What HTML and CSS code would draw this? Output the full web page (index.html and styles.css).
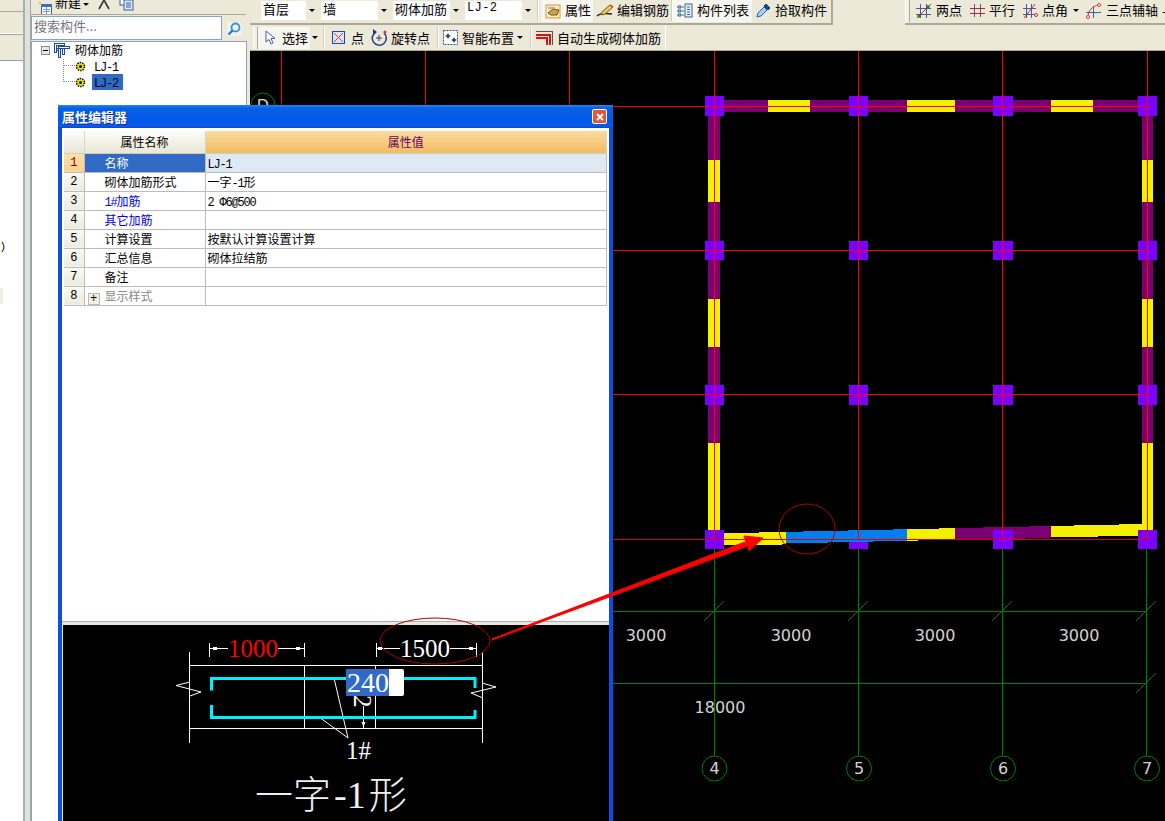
FILE: index.html
```html
<!DOCTYPE html>
<html lang="zh">
<head>
<meta charset="utf-8">
<title>属性编辑器</title>
<link rel="stylesheet" href="styles.css">
</head>
<body>
<div class="app">
  <aside class="sidebar">
    <div class="side-row side-row-a"></div>
    <div class="side-row side-row-b"></div>
    <div class="side-row side-row-c"></div>
    <div class="side-list">
      <div class="side-text">?)</div>
      <div class="side-mark"></div>
    </div>
  </aside>
  <div class="splitter"></div>
  <section class="panel">
    <div class="panel-tools">
      <svg class="ptool-new" width="14" height="14" viewBox="0 0 14 14"><rect x="2.500" y="2.500" width="10" height="10" fill="#fff" stroke="#3b5fa8"/><rect x="2" y="2" width="11" height="3" fill="#3b6fc4"/><path d="M4 7.500h7M4 9.500h7M7.500 5v7" stroke="#7f9bd0"/><rect x="0" y="0" width="2" height="2" fill="#e8c040"/></svg>
      <span class="ptool-label">新建</span>
      <span class="caret ptool-caret"></span>
      <svg class="ptool-x" width="13" height="13" viewBox="0 0 13 13"><path d="M1 12L6 3 11 12M6 3L3 0M6 3l3-3" fill="none" stroke="#333" stroke-width="1.6"/></svg>
      <svg class="ptool-copy" width="15" height="14" viewBox="0 0 15 14"><rect x="1" y="0" width="8" height="8" fill="#fff" stroke="#3b5fa8"/><rect x="5" y="3" width="9" height="10" fill="#dfe8f8" stroke="#3b5fa8"/><path d="M7 6h5M7 8h5M7 10h5" stroke="#3b5fa8"/></svg>
    </div>
    <div class="search-row">
      <div class="search-box">搜索构件...</div>
      <div class="search-btn">
        <svg width="14" height="14" viewBox="0 0 14 14"><circle cx="8.5" cy="5.5" r="4" fill="#e8f4ff" stroke="#3a8fd8" stroke-width="1.8"/><path d="M5.5 8.5L1.5 12.5" stroke="#2a78c8" stroke-width="2.4"/></svg>
      </div>
    </div>
    <div class="tree">
      <div class="tree-root">
        <span class="expander"></span>
        <svg class="tree-icon" width="16" height="15" viewBox="0 0 16 15" shape-rendering="crispEdges"><path d="M0.500 0.500h10v2h-8v7h-2zM4.500 3.500h11v2h-11zM4.500 5.500h2v9h-2zM8.500 5.500h2v6h-2z" fill="#fff" stroke="#1c49a8"/><path d="M2.500 5.500h2M2.500 7.500h2" stroke="#1c49a8"/></svg>
        <span class="tree-label">砌体加筋</span>
      </div>
      <div class="tree-child">
        <span class="tree-dots"></span>
        <svg class="gear" width="11" height="11" viewBox="0 0 11 11"><circle cx="5.500" cy="5.500" r="4" fill="#e8e800" stroke="#000" stroke-width="1.500" stroke-dasharray="1.500 1"/><circle cx="5.500" cy="5.500" r="1.500" fill="#000"/></svg>
        <span class="tree-item latin">LJ-1</span>
      </div>
      <div class="tree-child">
        <span class="tree-dots tree-dots-tall"></span>
        <svg class="gear" width="11" height="11" viewBox="0 0 11 11"><circle cx="5.500" cy="5.500" r="4" fill="#e8e800" stroke="#000" stroke-width="1.500" stroke-dasharray="1.500 1"/><circle cx="5.500" cy="5.500" r="1.500" fill="#000"/></svg>
        <span class="tree-item tree-item-sel latin">LJ-2</span>
      </div>
    </div>
  </section>

  <main class="main">
    <div class="toolbars">
      <div class="tb-row tb-row-one">
        <div class="tb-group tb-group-left">
          <div class="combo combo-short"><span class="combo-text">首层</span><span class="combo-arrow"><span class="caret"></span></span></div>
          <div class="combo"><span class="combo-text">墙</span><span class="combo-arrow"><span class="caret"></span></span></div>
          <div class="combo"><span class="combo-text">砌体加筋</span><span class="combo-arrow"><span class="caret"></span></span></div>
          <div class="combo"><span class="combo-text latin-combo">LJ-2</span><span class="combo-arrow"><span class="caret"></span></span></div>
          <span class="sep sep-first"></span>
          <div class="tbtn tbtn-on tbtn-attr">
            <svg width="17" height="16" viewBox="0 0 17 16"><rect x="1" y="2" width="14" height="13" fill="#fbe9c0" stroke="#e8963a"/><path d="M3 10l5-4 6 1-2 5H6z" fill="#c9a24a" stroke="#6b5a20"/><path d="M3 5h7" stroke="#7f7f7f"/></svg>
            <span>属性</span>
          </div>
          <div class="tbtn tbtn-edit">
            <svg width="18" height="15" viewBox="0 0 18 15"><path d="M1 13c3-3 8-3 15-2" fill="none" stroke="#222" stroke-width="1.300"/><path d="M6 9l8-7 3 2-8 7-4 1z" fill="#efc94a" stroke="#6b5a20"/><path d="M14 2l3 2" stroke="#d04020" stroke-width="1.500"/></svg>
            <span>编辑钢筋</span>
          </div>
          <span class="sep sep-tight"></span>
          <div class="tbtn tbtn-on tbtn-list">
            <svg width="16" height="15" viewBox="0 0 16 15"><rect x="8" y="1" width="7" height="13" fill="#e8f0fc" stroke="#3b5fa8"/><path d="M10 4h3M10 6.500h3M10 9h3M10 11.500h3" stroke="#3b5fa8"/><path d="M1 3h3v2H1zM1 7h3v2H1zM1 11h3v2H1z" fill="#dfe8f8" stroke="#2a5c8a"/><path d="M5 4h2M5 8h2M5 12h2" stroke="#2a8a3a"/></svg>
            <span>构件列表</span>
          </div>
          <div class="tbtn tbtn-pick">
            <svg width="16" height="16" viewBox="0 0 16 16"><path d="M2 14l1-4 6-6 3 3-6 6z" fill="#a8d0f4" stroke="#2a62b8"/><path d="M9 3l2-2 4 4-2 2z" fill="#1c49a8" stroke="#1c3a78"/></svg>
            <span>拾取构件</span>
          </div>
        </div>
        <div class="tb-group tb-group-right">
          <span class="grip"></span>
          <div class="tbtn tbtn-axis tbtn-axis-first">
            <svg width="16" height="16" viewBox="0 0 16 16"><path d="M4.500 1v14M10.500 1v14M0 5.500h15M0 11.500h15" stroke="#3b5fa8"/><path d="M1 15L15 1" stroke="#e02020"/><circle cx="3" cy="13" r="1.700" fill="#2f7a20"/><circle cx="12" cy="4" r="1.700" fill="#2f7a20"/></svg>
            <span>两点</span>
          </div>
          <div class="tbtn tbtn-axis">
            <svg width="15" height="15" viewBox="0 0 15 15"><path d="M4.500 1v13M10.500 1v13" stroke="#3b5fa8"/><path d="M0 5.500h15M0 10.500h15" stroke="#c82020"/></svg>
            <span>平行</span>
          </div>
          <div class="tbtn tbtn-axis tbtn-angle">
            <svg width="15" height="16" viewBox="0 0 15 16"><path d="M3.500 1v14M8.500 1v14M0 5.500h13M0 11.500h13" stroke="#3b5fa8"/><path d="M1 15L12 1" stroke="#e02020"/><circle cx="13" cy="12" r="1.500" fill="#fff" stroke="#e02020"/></svg>
            <span>点角</span>
            <span class="caret caret-axis"></span>
          </div>
          <div class="tbtn tbtn-axis tbtn-arc">
            <svg width="16" height="16" viewBox="0 0 16 16"><path d="M7.500 3v12M0 9.500h15" stroke="#3b5fa8"/><path d="M2 14C2 8 6 3 13 2" fill="none" stroke="#e03030"/><circle cx="2" cy="14" r="1.500" fill="#fff" stroke="#e03030"/><circle cx="13" cy="2" r="1.500" fill="#fff" stroke="#e03030"/></svg>
            <span>三点辅轴</span>
          </div>
          <span class="tb-more">-</span>
        </div>
      </div>
      <div class="tb-row tb-row-two">
        <div class="tb-group tb-group-two">
          <span class="grip grip-two"></span>
          <div class="tbtn tbtn-on tbtn-select">
            <svg width="11" height="15" viewBox="0 0 11 15"><path d="M1 1v11l3-2.500 2 4.500 2-1-2-4.500h4z" fill="#fff" stroke="#3b5fa8"/></svg>
            <span>选择</span>
          </div>
          <span class="caret caret-two"></span>
          <span class="sep sep-a"></span>
          <div class="tbtn tbtn-point">
            <svg width="13" height="13" viewBox="0 0 13 13"><rect x="0.500" y="0.500" width="12" height="12" fill="#dbe6f8" stroke="#1c49a8"/><path d="M2 2l9 9M11 2l-9 9" stroke="#d04040"/></svg>
            <span>点</span>
          </div>
          <div class="tbtn tbtn-rotate">
            <svg width="17" height="17" viewBox="0 0 17 17"><path d="M5 3a7 7 0 1 0 8 1" fill="none" stroke="#1c3a78" stroke-width="1.500"/><path d="M2 0l4 3-4 2z" fill="#1c3a78"/><path d="M8 6v6M5 9h6" stroke="#1c3a78"/><circle cx="14" cy="3" r="1.500" fill="#d04040"/></svg>
            <span>旋转点</span>
          </div>
          <span class="sep sep-b"></span>
          <div class="tbtn tbtn-smart">
            <svg width="15" height="15" viewBox="0 0 15 15"><rect x="0.500" y="0.500" width="14" height="14" fill="#fff" stroke="#2a5c8a" stroke-dasharray="2 1"/><path d="M4 5l1-2 1 2 2 1-2 1-1 2-1-2-2-1zM10 9l1-2 1 2 2 1-2 1-1 2-1-2-2-1z" fill="#1c3a78"/></svg>
            <span>智能布置</span>
          </div>
          <span class="caret caret-smart"></span>
          <span class="sep sep-c"></span>
          <div class="tbtn tbtn-auto">
            <svg width="17" height="15" viewBox="0 0 17 15" shape-rendering="crispEdges"><path d="M0 1.500h16.500V15" fill="none" stroke="#555"/><path d="M0 4.500h13.500V15M0 7.500h10.500V15" fill="none" stroke="#e01010" stroke-width="2"/></svg>
            <span>自动生成砌体加筋</span>
          </div>
        </div>
      </div>
    </div>

    <div class="canvas">
      <svg class="canvas-svg" width="915" height="770" viewBox="250 51 915 770" shape-rendering="crispEdges">
        <g class="green">
          <path d="M714.500 540V756M858.500 540V756M1002.500 540V756M1146.500 540V756"/>
          <path d="M613 611.500H1147M613 683.500H1147"/>
          <path d="M704 621L724 601M848 621L868 601M992 621L1012 601M1136 621L1156 601M1136 693L1156 673"/>
        </g>
        <g class="wall-purple">
          <rect x="724" y="100" width="414" height="12"/>
          <rect x="708" y="116" width="12" height="414"/>
          <rect x="1142" y="116" width="11" height="414"/>
        </g>
        <g class="wall-yellow">
          <rect x="768" y="100" width="42" height="12"/>
          <rect x="907" y="100" width="48" height="12"/>
          <rect x="1051" y="100" width="42" height="12"/>
          <rect x="708" y="160" width="12" height="42"/>
          <rect x="708" y="299" width="12" height="48"/>
          <rect x="708" y="443" width="12" height="87"/>
          <rect x="1142" y="160" width="11" height="42"/>
          <rect x="1142" y="299" width="11" height="48"/>
          <rect x="1142" y="443" width="11" height="87"/>
          <polygon points="724,533 759,533 759,532 786,532 786,544 782,544 782,545 724,545"/>
          <polygon points="907,529 939,529 939,528 955,528 955,540 918,540 918,541 907,541"/>
          <polygon points="1051,526 1074,526 1074,525 1119,525 1119,524 1142,524 1142,536 1098,536 1098,537 1051,537 1051,538"/>
        </g>
        <polygon class="wall-purple" points="955,528 983,528 983,527 1029,527 1029,526 1051,526 1051,538 1000,539 955,539"/>
        <g class="node">
          <rect x="705" y="96" width="19" height="20"/><rect x="849" y="96" width="19" height="20"/><rect x="993" y="96" width="20" height="20"/><rect x="1138" y="96" width="19" height="20"/>
          <rect x="705" y="241" width="19" height="19"/><rect x="849" y="241" width="19" height="19"/><rect x="993" y="241" width="20" height="19"/><rect x="1138" y="241" width="19" height="19"/>
          <rect x="705" y="385" width="19" height="20"/><rect x="849" y="385" width="19" height="20"/><rect x="993" y="385" width="20" height="20"/><rect x="1138" y="385" width="19" height="20"/>
          <rect x="705" y="530" width="19" height="19"/><rect x="849" y="530" width="19" height="19"/><rect x="993" y="530" width="20" height="19"/><rect x="1138" y="530" width="19" height="19"/>
        </g>
        <polygon class="wall-blue" points="786,532 803,532 803,531 848,531 848,530 893,530 893,529 907,529 907,541 873,541 873,542 828,542 828,543 786,543"/>
        <g class="red">
          <path d="M281.500 51V110M425.500 51V110M569.500 51V110"/>
          <path d="M714.500 51V540M858.500 51V540M1002.500 51V540M1147.500 51V540"/>
          <path d="M613 106.500H1147M613 250.500H1147M613 394.500H1147"/>
        </g>
        <path class="red-thin" d="M613 539.500H1147"/>
        <g class="axis-text" shape-rendering="auto">
          <text x="646" y="641" text-anchor="middle">3000</text>
          <text x="791" y="641" text-anchor="middle">3000</text>
          <text x="935" y="641" text-anchor="middle">3000</text>
          <text x="1079" y="641" text-anchor="middle">3000</text>
          <text x="720" y="713" text-anchor="middle">18000</text>
          <text x="714.500" y="774" text-anchor="middle">4</text>
          <text x="859" y="774" text-anchor="middle">5</text>
          <text x="1003" y="774" text-anchor="middle">6</text>
          <text x="1147" y="774" text-anchor="middle">7</text>
          <text x="263" y="111" text-anchor="middle">D</text>
        </g>
        <g class="axis-ring" shape-rendering="auto">
          <circle cx="714.500" cy="768.500" r="12.500"/>
          <circle cx="859" cy="768.500" r="12.500"/>
          <circle cx="1003" cy="768.500" r="12.500"/>
          <circle cx="1147" cy="768.500" r="12.500"/>
          <circle cx="263" cy="105" r="12"/>
        </g>
      </svg>
    </div>
  </main>

  <div class="dialog">
    <div class="dialog-title">
      <span class="dialog-name">属性编辑器</span>
      <span class="dialog-close">
        <svg width="10" height="10" viewBox="0 0 10 10"><path d="M2 2l6 6M8 2l-6 6" stroke="#fff" stroke-width="2"/></svg>
      </span>
    </div>
    <div class="dialog-body">
      <table class="props">
        <colgroup><col class="col-num"><col class="col-name"><col class="col-val"></colgroup>
        <thead>
          <tr><th class="h-num"></th><th class="h-name">属性名称</th><th class="h-val">属性值</th></tr>
        </thead>
        <tbody>
          <tr class="row-sel"><td class="num">1</td><td class="name">名称</td><td class="val"><span class="latin">LJ-1</span></td></tr>
          <tr><td class="num">2</td><td class="name">砌体加筋形式</td><td class="val">一字<span class="latin">-1</span>形</td></tr>
          <tr><td class="num">3</td><td class="name link"><span class="latin">1#</span>加筋</td><td class="val"><span class="latin">2 Φ6@500</span></td></tr>
          <tr><td class="num">4</td><td class="name link">其它加筋</td><td class="val"></td></tr>
          <tr><td class="num">5</td><td class="name">计算设置</td><td class="val">按默认计算设置计算</td></tr>
          <tr><td class="num">6</td><td class="name">汇总信息</td><td class="val">砌体拉结筋</td></tr>
          <tr><td class="num">7</td><td class="name">备注</td><td class="val"></td></tr>
          <tr><td class="num">8</td><td class="name name-group"><span class="plus">+</span>显示样式</td><td class="val"></td></tr>
        </tbody>
      </table>
    </div>
    <div class="preview">
      <svg class="preview-svg" width="546" height="196" viewBox="63 625 546 196">
        <g class="pv-line" shape-rendering="crispEdges">
          <path d="M189.500 652V743M482.500 652V743M304.500 665V728M375.500 665V728"/>
          <path d="M189 665.500H482M189 728.500H482"/>
          <path d="M209.500 643V657M304.500 643V657M376.500 643V657M476.500 643V657"/>
          <path d="M209 648.500H228M278 648.500H304M376 648.500H400M450 648.500H476"/>
          <path d="M363.500 706V728"/>
        </g>
        <g class="pv-fill">
          <rect x="213" y="647" width="4" height="3"/><rect x="296" y="647" width="4" height="3"/>
          <rect x="378" y="647" width="4" height="3"/><rect x="469" y="647" width="4" height="3"/>
          <path d="M361.500 722h4l-2 5z"/>
        </g>
        <g class="pv-thin">
          <path d="M334 678L348 738M319 717L348 738"/>
          <path d="M190 682L176 685.500L201 692L190 696"/>
          <path d="M482 683L496 687L471 693L483 698"/>
        </g>
        <path class="rebar" d="M211.500 690.500V678.500H475V688"/>
        <path class="rebar" d="M211.500 705V717.500H475V710"/>
        <text class="pv-num pv-red" x="228" y="657">1000</text>
        <text class="pv-num" x="400" y="657">1500</text>
        <text class="pv-num" transform="rotate(90 354 695)" x="354" y="695">2</text>
        <rect class="edit-box" x="346" y="669" width="58" height="27" rx="2"/>
        <rect class="edit-sel" x="346" y="669" width="43" height="27"/>
        <text class="pv-num pv-edit" x="347" y="692">240</text>
        <text class="pv-num" x="346" y="759">1#</text>
        <text class="pv-title" x="255" y="808">一字<tspan class="pv-title-lat" dx="3">-1</tspan><tspan dx="3">形</tspan></text>
      </svg>
    </div>
  </div>

  <svg class="annot" width="1165" height="821" viewBox="0 0 1165 821">
    <ellipse class="annot-ring" cx="807" cy="529" rx="28" ry="25"/>
    <ellipse class="annot-ring" cx="435" cy="641" rx="55" ry="23"/>
    <polygon class="annot-arrow" points="492,639 746,541.500 744,536 763,538 749,551 748,546 492,640"/>
  </svg>
</div>
</body>
</html>
```
FILE: styles.css
```css
* { box-sizing: border-box; }
html, body { margin: 0; padding: 0; height: 100%; overflow: hidden; background: #fff; }
body { font-family: "Noto Sans CJK SC", "Liberation Sans", sans-serif; font-size: 12px; color: #000; }

.latin { font-family: "Liberation Mono", monospace; font-size: 12px; letter-spacing: -1.2px; line-height: 0; }

.app { position: relative; display: flex; width: 1165px; height: 821px; overflow: hidden; }

/* far-left strip */
.sidebar { width: 23px; flex: none; display: flex; flex-direction: column; background: #fff; }
.side-row { background: #ece9d8; flex: none; border-bottom: 1px solid #aca899; }
.side-row-a { height: 12px; }
.side-row-b { height: 22px; border-bottom: 1px solid #fff; }
.side-row-c { height: 27px; border-top: 1px solid #aca899; border-bottom: 1px solid #8aa0bc; }
.side-list { flex: 1; overflow: hidden; }
.side-text { margin: 176px 0 0 -7px; height: 20px; line-height: 20px; font-family: "Liberation Mono", monospace; font-size: 11px; white-space: nowrap; }
.side-mark { margin-top: 31px; width: 3px; height: 16px; background: #f1efe2; }

.splitter { width: 8px; flex: none; background: #e4e1cf; border-left: 2px solid #9db0c8; border-right: 1px solid #8ea6c2; }

/* component panel */
.panel { width: 219px; flex: none; display: flex; flex-direction: column; background: #ece9d8; }
.panel-tools { height: 15px; flex: none; display: flex; align-items: center; border-bottom: 1px solid #aca899; margin-right: 4px; position: relative; overflow: hidden; padding-left: 8px; }
.ptool-new { flex: none; margin-top: 3px; }
.ptool-label { flex: none; margin: -11px 0 0 2px; font-size: 13px; line-height: 15px; width: 27px; }
.ptool-caret { flex: none; margin: -6px 0 0 1px; }
.ptool-x { flex: none; margin: -8px 0 0 9px; }
.ptool-copy { flex: none; margin: -6px 0 0 8px; }
.search-row { height: 26px; flex: none; display: flex; align-items: flex-start; padding-top: 1px; }
.search-box { width: 191px; height: 24px; flex: none; background: #fff; border: 1px solid #8aa5c4; color: #777; font-size: 13px; line-height: 18px; padding-left: 2px; }
.search-btn { width: 15px; height: 14px; margin: 6px 0 0 5px; flex: none; background: #f3f2ea; display: flex; }
.tree { flex: 1; background: #fff; border: 1px solid #8aa5c4; border-bottom: 0; margin-right: 3px; }
.tree-root { height: 16px; display: flex; align-items: center; padding-left: 9px; }
.expander { position: relative; width: 9px; height: 9px; flex: none; border: 1px solid #7f8f9f; background: #e8e8e0; }
.expander::after { content: ""; position: absolute; left: 1px; top: 3px; width: 5px; height: 1px; background: #000; }
.tree-icon { flex: none; margin-left: 4px; }
.tree-label { margin-left: 5px; line-height: 16px; }
.tree-child { position: relative; height: 16px; display: flex; align-items: center; padding-left: 43px; }
.tree-dots { position: absolute; left: 31px; top: 1px; width: 12px; height: 7px; border-left: 1px dotted #888; border-bottom: 1px dotted #888; }
.tree-dots-tall { top: -7px; height: 15px; }
.gear { flex: none; }
.tree-item { margin-left: 6px; padding: 2px 2px 0; line-height: 16px; height: 16px; width: 31px; }
.tree-item-sel { background: #316ac5; }

/* main column */
.main { flex: 1; min-width: 0; display: flex; flex-direction: column; }
.toolbars { height: 51px; flex: none; background: #ece9d8; border-bottom: 1px solid #aca899; }
.tb-row { display: flex; }
.tb-row-one { height: 25px; }
.tb-row-two { height: 25px; }
.tb-group { display: flex; align-items: center; height: 100%; font-size: 13px; border-bottom: 2px solid #aca899; }
.tb-row-two .tb-group { border-bottom: 0; }
.tb-group-left { width: 583px; padding-left: 11px; border-right: 2px solid #aca899; }
.tb-group-right { margin-left: 72px; flex: 1; min-width: 0; }
.tb-group-two { width: 416px; border-right: 1px solid #fff; padding-left: 3px; }

.combo { width: 68px; height: 19px; flex: none; display: flex; background: #fff; margin-right: 4px; margin-top: -3px; }
.combo-short { width: 56px; }
.combo-text { flex: 1; padding-left: 2px; line-height: 15px; white-space: nowrap; }
.latin-combo { font-family: "Liberation Mono", monospace; font-size: 12px; letter-spacing: .4px; }
.combo-arrow { width: 11px; flex: none; background: #ece9d8; display: flex; align-items: center; justify-content: center; }
.caret { display: inline-block; width: 0; height: 0; border: 3px solid transparent; border-top: 3px solid #000; border-bottom: 0; flex: none; }

.sep { width: 2px; height: 21px; flex: none; background: #d3cfbb; border-right: 1px solid #fff; margin-top: -2px; }
.sep-first { margin-right: 2px; }
.sep-tight { margin: -2px 0 0 1px; }
.sep-a { margin: 0 7px 0 5px; }
.sep-b { margin: 0 4px 0 7px; }
.sep-c { margin: 0 4px 0 7px; }

.tbtn { display: flex; align-items: center; height: 22px; flex: none; white-space: nowrap; margin-top: -2px; }
.tbtn span { line-height: 18px; }
.tb-row-one .tbtn span { padding-bottom: 2px; }
.tb-row-one .tbtn .caret { padding: 0; }
.tbtn-on { background: #f7f6f0; }
.tbtn-attr { width: 52px; padding-left: 4px; gap: 3px; }
.tbtn-edit { margin-left: 3px; width: 74px; gap: 3px; }
.tbtn-list { width: 79px; padding-left: 4px; gap: 4px; }
.tbtn-pick { margin-left: 3px; width: 74px; gap: 4px; }
.grip { width: 5px; height: 22px; flex: none; background: #f3f1e6; border-left: 1px solid #fff; border-right: 1px solid #aca899; margin-top: -2px; }
.tbtn-axis { gap: 4px; margin-left: 8px; }
.tbtn-axis-first { margin-left: 6px; }
.caret-axis { margin-left: 1px; }
.tbtn-arc { margin-left: 7px; }
.tb-more { margin-left: 4px; margin-top: -2px; }
.grip-two { margin-top: 0; height: 22px; }
.tbtn-select { margin-top: 0; width: 52px; padding-left: 7px; gap: 6px; }
.caret-two { margin-left: 2px; }
.caret-smart { margin-left: 3px; }
.tbtn-point { margin-top: 0; gap: 6px; }
.tbtn-rotate { margin-top: 0; gap: 3px; margin-left: 7px; }
.tbtn-smart { margin-top: 0; gap: 4px; }
.tbtn-auto { margin-top: 0; gap: 4px; }

/* drawing canvas */
.canvas { flex: 1; min-height: 0; background: #000; overflow: hidden; }
.canvas-svg { display: block; }
.green path { fill: none; stroke: #008000; stroke-width: 1; }
.wall-purple { fill: #7b0073; }
.wall-yellow { fill: #f5f000; }
.wall-blue { fill: #0080f0; }
.node { fill: #7b00ff; }
.red path { fill: none; stroke: #ff0000; stroke-width: 1; }
.red-thin { fill: none; stroke: #e00000; stroke-width: 1; }
.axis-text text { font-family: "DejaVu Sans", sans-serif; font-size: 16px; fill: #d4d4d4; }
.axis-ring circle { fill: none; stroke: #008000; stroke-width: 1; }

/* floating dialog */
.dialog { position: absolute; left: 58px; top: 105px; width: 555px; height: 716px; display: flex; flex-direction: column; background: #0053e0; border: 4px solid #0a4fe0; border-width: 0 4px; }
.dialog-title { height: 23px; flex: none; margin: 0 -4px; padding: 0 6px 0 4px; display: flex; align-items: center; justify-content: space-between; background: linear-gradient(#2a86f0 0, #0860e6 3px, #0058e6 70%, #0a5cf0 90%, #0048d0 100%); }
.dialog-name { color: #fff; font-weight: 700; font-size: 13px; line-height: 16px; text-shadow: 1px 1px 0 #0a2f90; }
.dialog-close { width: 15px; height: 15px; display: flex; align-items: center; justify-content: center; background: #dc5a3a; border: 1px solid #fff; border-radius: 2px; }
.dialog-body { flex: 1; min-height: 0; background: #fff; padding: 3px 2px 0 2px; border-bottom: 1px solid #9db0c8; }
.props { width: 543px; table-layout: fixed; border-collapse: collapse; }
.col-num { width: 20px; }
.col-name { width: 121px; }
.props th { height: 22px; padding: 0; font-weight: 400; font-size: 12px; border-right: 1px solid #d8d6c8; border-bottom: 1px solid #cfcdbd; background: linear-gradient(#fdfcf8, #e9e6d6); }
.props th.h-val { background: linear-gradient(#f9dba0, #f1bd60); color: #6a0060; }
.props td { height: 19px; padding: 0; line-height: 18px; border-bottom: 1px solid #bcbcbc; border-right: 1px solid #bcbcbc; white-space: nowrap; overflow: hidden; }
.num { text-align: center; font-family: "Liberation Mono", monospace; font-size: 12px; background: linear-gradient(#fafaf4, #ecebdd); }
.name { padding-left: 20px !important; }
.val { padding-left: 2px !important; }
.link { color: #0000f0; }
.row-sel .num { background: linear-gradient(#fde0a8, #f9d090); color: #800000; }
.row-sel .name { background: #316ac5; color: #fff; }
.row-sel .val { background: #dfe8f5; }
.name-group { color: #888; padding-left: 3px !important; }
.plus { display: inline-block; width: 12px; height: 12px; margin-right: 5px; background: #f1efe6; border: 1px solid #bbb; color: #000; line-height: 10px; text-align: center; font-family: "Liberation Mono", monospace; font-size: 12px; vertical-align: -1px; }

.preview { height: 199px; flex: none; background: #ece9d8; padding: 3px 0 0 1px; }
.preview-svg { display: block; background: #000; }
.pv-line path { fill: none; stroke: #fff; stroke-width: 1; }
.pv-fill { fill: #fff; }
.pv-thin path { fill: none; stroke: #fff; stroke-width: 1; }
.rebar { fill: none; stroke: #00f0ff; stroke-width: 3; }
.pv-num { font-family: "Liberation Serif", serif; font-size: 25px; fill: #fff; }
.pv-edit { font-size: 28px; }
.pv-red { fill: #ff0000; }
.edit-box { fill: #fff; }
.edit-sel { fill: #316ac5; }
.pv-title { font-family: "Noto Sans CJK SC", sans-serif; font-weight: 300; font-size: 38px; fill: #f0f0f0; }
.pv-title-lat { font-family: "Liberation Serif", serif; }

/* red mark-up drawn over the whole screen */
.annot { position: absolute; left: 0; top: 0; pointer-events: none; }
.annot-ring { fill: none; stroke: #b00000; stroke-width: 1; }
.annot-arrow { fill: #ff0000; stroke: #ff0000; stroke-width: 1; }
```
